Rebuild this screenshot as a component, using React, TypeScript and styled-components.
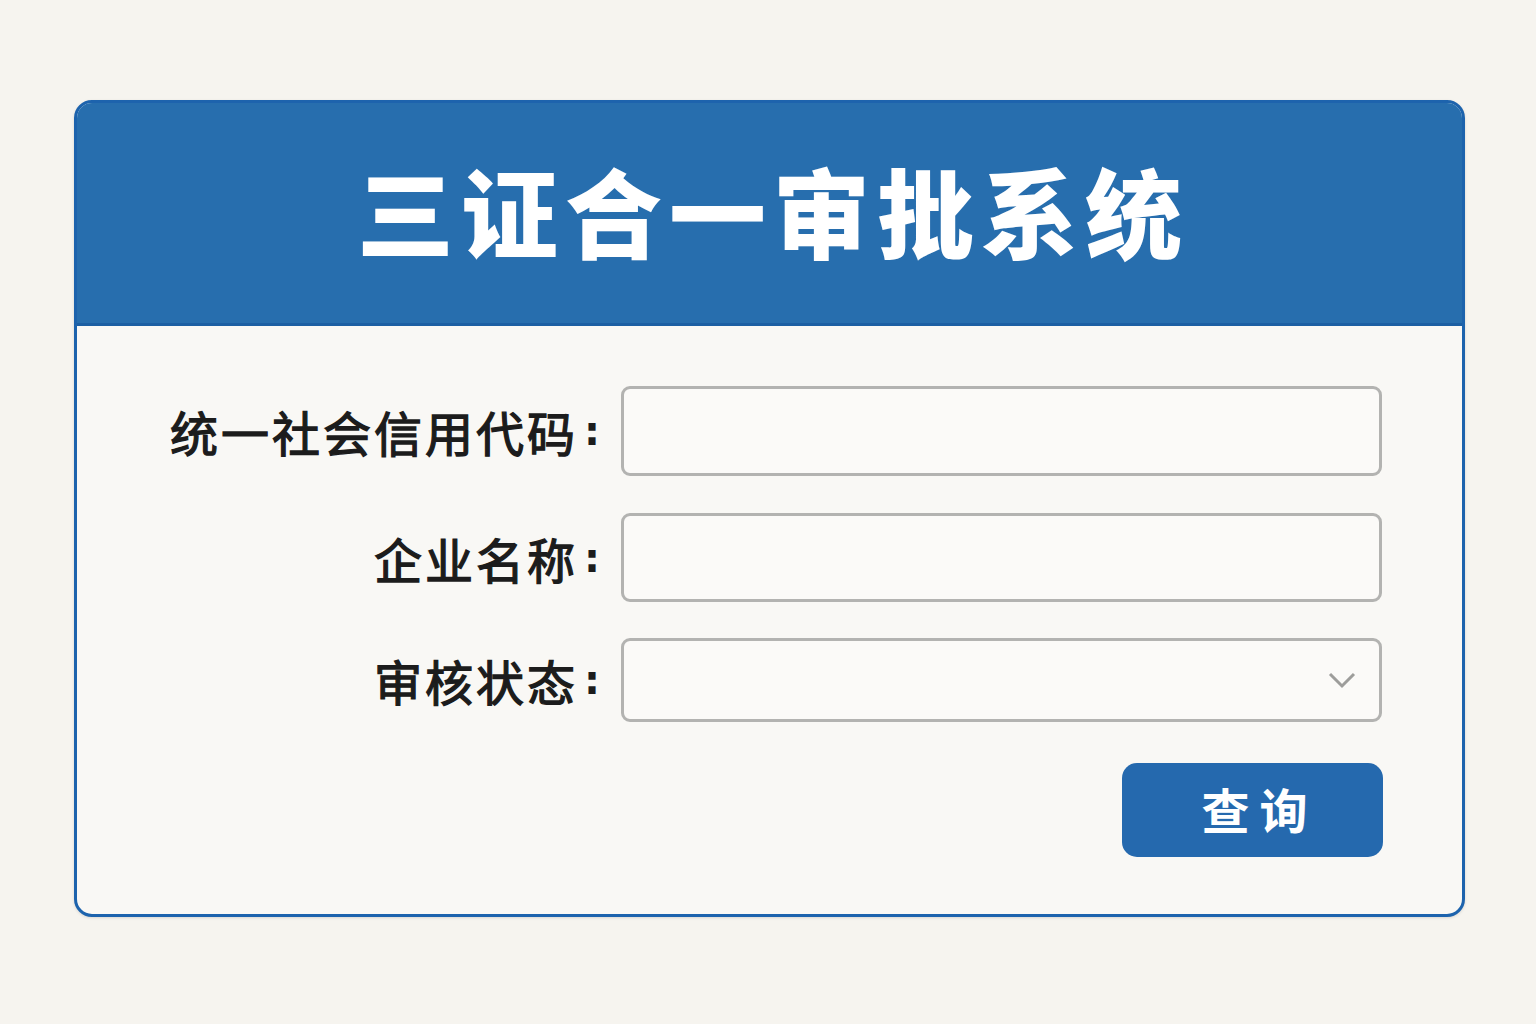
import React from "react";
import styled, { createGlobalStyle } from "styled-components";

const Global = createGlobalStyle`
  html, body { margin: 0; padding: 0; background: #f6f4ef; }
  body { font-family: "Noto Sans CJK SC", "Noto Sans", sans-serif; }
  * { box-sizing: border-box; }
`;

const Page = styled.div`
  width: 1536px;
  height: 1024px;
  padding: 100px 0 0 74px;
`;

const Card = styled.div`
  width: 1391px;
  border: 3px solid #1d63ad;
  border-radius: 18px;
  overflow: hidden;
  background: #f9f8f5;
  box-shadow: 0 1px 3px rgba(0, 0, 0, 0.12);
`;

const Header = styled.div`
  height: 223px;
  background: #276eae;
  border-bottom: 3px solid #1c5fa3;
  display: flex;
  align-items: center;
  justify-content: center;
`;

const Title = styled.h1`
  margin: 0 0 10px 0;
  color: #ffffff;
  font-size: 97px;
  font-weight: 900;
  letter-spacing: 7px;
  line-height: 1;
  padding-left: 7px;
`;

const Body = styled.div`
  padding: 60px 80px 57px 80px;
  display: flex;
  flex-direction: column;
`;

const Form = styled.div`
  display: grid;
  grid-template-columns: 443px 1fr;
  column-gap: 21px;
`;

const Label = styled.label<{ $mt: number }>`
  display: flex;
  align-items: center;
  justify-content: flex-end;
  color: #1c1c1c;
  font-size: 48px;
  font-weight: 400;
  -webkit-text-stroke: 1.3px #1c1c1c;
  letter-spacing: 3px;
  margin-top: ${(p) => p.$mt}px;
  white-space: nowrap;
`;

const Colon = styled.span`
  display: inline-block;
  width: 22px;
  text-align: right;
  letter-spacing: 0;
  -webkit-text-stroke: 0;
  font-family: "DejaVu Sans", sans-serif;
  font-weight: 700;
  font-size: 40px;
`;

const Field = styled.div<{ $h: number; $mt: number }>`
  position: relative;
  height: ${(p) => p.$h}px;
  margin-top: ${(p) => p.$mt}px;
  border: 3px solid #b3b3b1;
  border-radius: 9px;
  background: #fbfaf8;
`;

const Input = styled.input`
  width: 100%;
  height: 100%;
  border: none;
  outline: none;
  background: transparent;
  font-size: 32px;
  padding: 0 20px;
  font-family: "Noto Sans CJK SC", sans-serif;
`;

const Chevron = styled.svg`
  position: absolute;
  right: 22px;
  top: 50%;
  transform: translateY(-50%);
`;

const Actions = styled.div`
  display: flex;
  justify-content: flex-end;
  margin-top: 41px;
  margin-right: -1px;
`;

const Button = styled.button`
  width: 261px;
  height: 94px;
  border: none;
  border-radius: 15px;
  background: #2569ae;
  color: #ffffff;
  font-family: "Noto Sans CJK SC", sans-serif;
  font-size: 48px;
  font-weight: 700;
  letter-spacing: 10px;
  padding: 0 0 4px 14px;
  cursor: pointer;
`;

const rows = [
  { label: "统一社会信用代码", h: 90, mt: 0 },
  { label: "企业名称", h: 89, mt: 37 },
  { label: "审核状态", h: 84, mt: 36, select: true },
];

export default function App() {
  return (
    <Page>
      <Global />
      <Card>
        <Header>
          <Title>三证合一审批系统</Title>
        </Header>
        <Body>
          <Form>
            {rows.map((r) => (
              <React.Fragment key={r.label}>
                <Label $mt={r.mt}>
                  {r.label}
                  <Colon>:</Colon>
                </Label>
                <Field $h={r.h} $mt={r.mt}>
                  <Input readOnly={!!r.select} />
                  {r.select && (
                    <Chevron width="30" height="18" viewBox="0 0 30 18">
                      <polyline
                        points="3,3 15,15 27,3"
                        fill="none"
                        stroke="#9d9d9b"
                        strokeWidth="3"
                      />
                    </Chevron>
                  )}
                </Field>
              </React.Fragment>
            ))}
          </Form>
          <Actions>
            <Button>查询</Button>
          </Actions>
        </Body>
      </Card>
    </Page>
  );
}
